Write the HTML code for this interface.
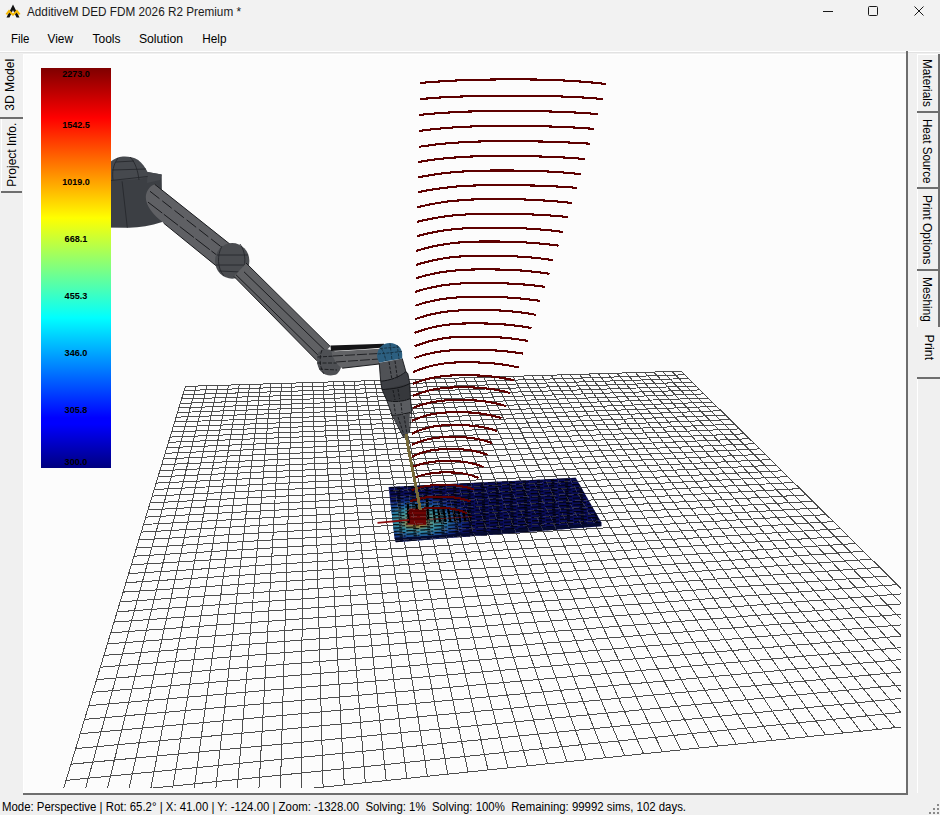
<!DOCTYPE html>
<html><head><meta charset="utf-8"><title>AdditiveM DED FDM 2026 R2 Premium</title>
<style>
html,body{margin:0;padding:0;width:940px;height:815px;overflow:hidden;background:#f0f0f0;}
svg{position:absolute;left:0;top:0;display:block}
text{font-family:"Liberation Sans",sans-serif;}
</style></head><body>
<svg width="940" height="815" viewBox="0 0 940 815">
<defs>
<clipPath id="vp"><rect x="24" y="55" width="877" height="733"/></clipPath>
<linearGradient id="jet" x1="0" y1="1" x2="0" y2="0">
<stop offset="0" stop-color="#00007f"/>
<stop offset="0.11" stop-color="#0000ff"/>
<stop offset="0.125" stop-color="#0000ff"/>
<stop offset="0.375" stop-color="#00ffff"/>
<stop offset="0.625" stop-color="#ffff00"/>
<stop offset="0.875" stop-color="#ff0000"/>
<stop offset="1" stop-color="#7f0000"/>
</linearGradient>
</defs>
<rect x="0" y="0" width="940" height="815" fill="#f0f0f0"/>
<!-- title bar -->
<rect x="0" y="0" width="940" height="27" fill="#f2f2f2"/>
<rect x="0" y="27" width="940" height="24" fill="#f2f2f2"/>
<rect x="0" y="51" width="940" height="1" fill="#ffffff"/>
<rect x="0" y="52" width="940" height="1" fill="#e2e2e2"/>

<g>
<path d="M13 4.5 L19.5 17.5 L16.5 17.5 L13 10 L9.5 17.5 L6.5 17.5 Z" fill="#111"/>
<path d="M5.5 14 L9 9.5 L13 13.5 L17 9.5 L20.5 14 L18.5 15 L17 12.5 L13 16 L9 12.5 L7.5 15 Z" fill="#f5b800"/>
</g>
<text x="27" y="15.6" font-size="12.2" fill="#1a1a1a" textLength="214" lengthAdjust="spacingAndGlyphs">AdditiveM DED FDM 2026 R2 Premium *</text>
<rect x="823" y="11" width="10" height="1" fill="#1a1a1a"/>
<rect x="868.5" y="6.5" width="9" height="9" rx="1" fill="none" stroke="#1a1a1a" stroke-width="1"/>
<path d="M914.5 6.5 L923.5 15.5 M923.5 6.5 L914.5 15.5" stroke="#1a1a1a" stroke-width="1"/>
<text x="11" y="42.7" font-size="12" fill="#000" textLength="18.5" lengthAdjust="spacingAndGlyphs">File</text>
<text x="47.5" y="42.7" font-size="12" fill="#000" textLength="25.5" lengthAdjust="spacingAndGlyphs">View</text>
<text x="92.5" y="42.7" font-size="12" fill="#000" textLength="28" lengthAdjust="spacingAndGlyphs">Tools</text>
<text x="138.9" y="42.7" font-size="12" fill="#000" textLength="44.2" lengthAdjust="spacingAndGlyphs">Solution</text>
<text x="202.3" y="42.7" font-size="12" fill="#000" textLength="24.2" lengthAdjust="spacingAndGlyphs">Help</text>
<rect x="23" y="54" width="885" height="741" fill="#fcfcfc"/>
<rect x="23" y="54" width="883" height="1" fill="#ffffff"/>
<rect x="23" y="54" width="1" height="739" fill="#ffffff"/>
<rect x="906" y="51" width="2" height="744" fill="#6e6e6e"/>
<rect x="23" y="793" width="885" height="2" fill="#6e6e6e"/>

<g clip-path="url(#vp)">
<path d="M185.4 386.4L55.6 814.9M196.2 386.1L78.9 812.5M207.0 385.7L102.0 810.1M217.8 385.4L124.9 807.7M228.5 385.1L147.6 805.3M239.2 384.7L170.2 803.0M249.8 384.4L192.5 800.7M260.4 384.1L214.7 798.4M270.9 383.8L236.7 796.1M281.5 383.4L258.6 793.8M291.9 383.1L280.3 791.6M302.4 382.8L301.8 789.3M312.8 382.5L323.1 787.1M323.1 382.2L344.3 784.9M333.5 381.8L365.3 782.7M343.7 381.5L386.2 780.6M354.0 381.2L406.9 778.4M364.2 380.9L427.4 776.3M374.4 380.6L447.8 774.1M384.5 380.3L468.1 772.0M394.6 380.0L488.1 770.0M404.6 379.7L508.1 767.9M414.7 379.4L527.9 765.8M424.6 379.0L547.5 763.8M434.6 378.7L567.0 761.8M444.5 378.4L586.4 759.7M454.4 378.1L605.6 757.7M464.2 377.8L624.7 755.8M474.0 377.5L643.6 753.8M483.8 377.2L662.4 751.8M493.5 376.9L681.1 749.9M503.2 376.6L699.6 748.0M512.9 376.3L718.0 746.1M522.5 376.0L736.3 744.2M532.1 375.7L754.4 742.3M541.7 375.5L772.4 740.4M551.2 375.2L790.3 738.6M560.7 374.9L808.1 736.7M570.1 374.6L825.7 734.9M579.5 374.3L843.2 733.1M588.9 374.0L860.6 731.2M598.3 373.7L877.9 729.5M607.6 373.4L895.0 727.7M616.9 373.1L912.1 725.9M626.1 372.9L929.0 724.1M635.4 372.6L945.8 722.4M644.6 372.3L962.5 720.7M653.7 372.0L979.0 718.9M662.8 371.7L995.5 717.2M671.9 371.5L1011.9 715.5M681.0 371.2L1028.1 713.8M185.4 386.4L681.0 371.2M184.1 390.5L684.7 374.8M182.8 394.7L688.4 378.5M181.5 399.0L692.2 382.2M180.2 403.4L696.1 386.0M178.8 407.9L700.0 389.9M177.5 412.5L704.0 393.9M176.0 417.2L708.2 398.0M174.6 422.0L712.4 402.1M173.1 426.9L716.6 406.4M171.6 431.9L721.0 410.7M170.0 437.1L725.5 415.1M168.4 442.3L730.1 419.6M166.8 447.7L734.7 424.2M165.1 453.3L739.5 428.9M163.4 458.9L744.4 433.8M161.6 464.7L749.4 438.7M159.8 470.7L754.5 443.7M158.0 476.8L759.7 448.9M156.1 483.1L765.1 454.2M154.1 489.5L770.5 459.6M152.1 496.1L776.1 465.1M150.1 502.9L781.9 470.8M148.0 509.9L787.7 476.6M145.8 517.1L793.8 482.5M143.6 524.5L799.9 488.6M141.3 532.1L806.3 494.9M138.9 539.9L812.8 501.3M136.4 547.9L819.4 507.9M133.9 556.2L826.3 514.6M131.4 564.8L833.3 521.6M128.7 573.6L840.5 528.7M125.9 582.7L848.0 536.0M123.1 592.1L855.6 543.5M120.2 601.8L863.4 551.3M117.1 611.8L871.5 559.2M114.0 622.1L879.8 567.4M110.8 632.8L888.4 575.9M107.4 643.9L897.2 584.6M103.9 655.4L906.2 593.5M100.3 667.2L915.6 602.8M96.6 679.6L925.3 612.3M92.7 692.3L935.2 622.1M88.7 705.6L945.5 632.3M84.5 719.4L956.1 642.8M80.2 733.7L967.1 653.6M75.7 748.6L978.5 664.9M71.0 764.2L990.2 676.5M66.1 780.4L1002.4 688.5M61.0 797.3L1015.0 700.9M55.6 814.9L1028.1 713.8" stroke="#4d4d4d" stroke-width="1" fill="none" shape-rendering="crispEdges"/>
</g>
<defs>
<radialGradient id="heat" cx="0.5" cy="0.5" r="0.5">
<stop offset="0" stop-color="#a08838"/>
<stop offset="0.2" stop-color="#5a9a88"/>
<stop offset="0.45" stop-color="#2e88a8"/>
<stop offset="0.72" stop-color="#1a48a0" stop-opacity="0.7"/>
<stop offset="1" stop-color="#0b1068" stop-opacity="0"/>
</radialGradient>
<radialGradient id="hot" cx="0.5" cy="0.5" r="0.5">
<stop offset="0" stop-color="#c87818"/>
<stop offset="0.6" stop-color="#a07028" stop-opacity="0.6"/>
<stop offset="1" stop-color="#a07028" stop-opacity="0"/>
</radialGradient>
<pattern id="mesh" width="14" height="3.4" patternUnits="userSpaceOnUse" patternTransform="rotate(-3)">
<rect x="0" y="0" width="10" height="1.3" fill="#000"/>
<rect x="7" y="1.7" width="6" height="1.1" fill="#000"/>
</pattern>
<clipPath id="platec"><polygon points="388.6,487.1 575.7,477.8 601.4,522.6 601.4,526.3 395.9,542.2 394.7,538.5"/></clipPath>
</defs>
<g clip-path="url(#vp)">
<polygon points="388.6,487.1 575.7,477.8 601.4,522.6 601.4,526.3 395.9,542.2 394.7,538.5" fill="#0a0d5c"/>
<g clip-path="url(#platec)">
<ellipse cx="418" cy="520" rx="58" ry="27" fill="url(#heat)"/>
<ellipse cx="416" cy="524" rx="16" ry="6" fill="url(#hot)"/>
<rect x="0" y="470" width="620" height="80" fill="url(#mesh)" opacity="0.9"/>
<rect x="407.6" y="508.5" width="18.6" height="16.3" fill="#6e0505"/>
<path d="M409 511h18M410 515h17M409 519h18" stroke="#3a0000" stroke-width="1"/>
<path d="M407.8 502.5l0.8 20.5M427 499.5l1 19.5M416 504l1 6M433 506l2 16M438 507l2 15M443 507l2.5 15M448 508l2.5 14M453 508l2.5 14M458 509l2.5 13M463 510l2.5 12M468 511l2 10" stroke="#000" stroke-width="2.2"/>
<path d="M428 519.5 L472 516.5" stroke="#901010" stroke-width="1" opacity="0.6"/>
<path d="M394.7 540 L601.4 524.2" stroke="#050a30" stroke-width="3"/>

<path d="M185.4 386.4L55.6 814.9M196.2 386.1L78.9 812.5M207.0 385.7L102.0 810.1M217.8 385.4L124.9 807.7M228.5 385.1L147.6 805.3M239.2 384.7L170.2 803.0M249.8 384.4L192.5 800.7M260.4 384.1L214.7 798.4M270.9 383.8L236.7 796.1M281.5 383.4L258.6 793.8M291.9 383.1L280.3 791.6M302.4 382.8L301.8 789.3M312.8 382.5L323.1 787.1M323.1 382.2L344.3 784.9M333.5 381.8L365.3 782.7M343.7 381.5L386.2 780.6M354.0 381.2L406.9 778.4M364.2 380.9L427.4 776.3M374.4 380.6L447.8 774.1M384.5 380.3L468.1 772.0M394.6 380.0L488.1 770.0M404.6 379.7L508.1 767.9M414.7 379.4L527.9 765.8M424.6 379.0L547.5 763.8M434.6 378.7L567.0 761.8M444.5 378.4L586.4 759.7M454.4 378.1L605.6 757.7M464.2 377.8L624.7 755.8M474.0 377.5L643.6 753.8M483.8 377.2L662.4 751.8M493.5 376.9L681.1 749.9M503.2 376.6L699.6 748.0M512.9 376.3L718.0 746.1M522.5 376.0L736.3 744.2M532.1 375.7L754.4 742.3M541.7 375.5L772.4 740.4M551.2 375.2L790.3 738.6M560.7 374.9L808.1 736.7M570.1 374.6L825.7 734.9M579.5 374.3L843.2 733.1M588.9 374.0L860.6 731.2M598.3 373.7L877.9 729.5M607.6 373.4L895.0 727.7M616.9 373.1L912.1 725.9M626.1 372.9L929.0 724.1M635.4 372.6L945.8 722.4M644.6 372.3L962.5 720.7M653.7 372.0L979.0 718.9M662.8 371.7L995.5 717.2M671.9 371.5L1011.9 715.5M681.0 371.2L1028.1 713.8M185.4 386.4L681.0 371.2M184.1 390.5L684.7 374.8M182.8 394.7L688.4 378.5M181.5 399.0L692.2 382.2M180.2 403.4L696.1 386.0M178.8 407.9L700.0 389.9M177.5 412.5L704.0 393.9M176.0 417.2L708.2 398.0M174.6 422.0L712.4 402.1M173.1 426.9L716.6 406.4M171.6 431.9L721.0 410.7M170.0 437.1L725.5 415.1M168.4 442.3L730.1 419.6M166.8 447.7L734.7 424.2M165.1 453.3L739.5 428.9M163.4 458.9L744.4 433.8M161.6 464.7L749.4 438.7M159.8 470.7L754.5 443.7M158.0 476.8L759.7 448.9M156.1 483.1L765.1 454.2M154.1 489.5L770.5 459.6M152.1 496.1L776.1 465.1M150.1 502.9L781.9 470.8M148.0 509.9L787.7 476.6M145.8 517.1L793.8 482.5M143.6 524.5L799.9 488.6M141.3 532.1L806.3 494.9M138.9 539.9L812.8 501.3M136.4 547.9L819.4 507.9M133.9 556.2L826.3 514.6M131.4 564.8L833.3 521.6M128.7 573.6L840.5 528.7M125.9 582.7L848.0 536.0M123.1 592.1L855.6 543.5M120.2 601.8L863.4 551.3M117.1 611.8L871.5 559.2M114.0 622.1L879.8 567.4M110.8 632.8L888.4 575.9M107.4 643.9L897.2 584.6M103.9 655.4L906.2 593.5M100.3 667.2L915.6 602.8M96.6 679.6L925.3 612.3M92.7 692.3L935.2 622.1M88.7 705.6L945.5 632.3M84.5 719.4L956.1 642.8M80.2 733.7L967.1 653.6M75.7 748.6L978.5 664.9M71.0 764.2L990.2 676.5M66.1 780.4L1002.4 688.5M61.0 797.3L1015.0 700.9M55.6 814.9L1028.1 713.8" stroke="#808080" stroke-width="1" fill="none" opacity="0.32" stroke-dasharray="6 3" shape-rendering="crispEdges"/>
</g>
</g>
<path d="M420.4 83.0L427.0 82.4L433.7 81.9L440.3 81.4L447.0 81.0L453.6 80.6L460.2 80.3L466.9 80.1L473.5 79.9L480.2 79.7L486.8 79.6L493.4 79.5L500.1 79.4L506.7 79.4L513.3 79.4L520.0 79.4L526.6 79.4L533.3 79.5L539.9 79.6L546.5 79.8L553.2 80.0L559.8 80.3L566.5 80.6L573.1 81.0L579.7 81.5L586.4 82.0L593.0 82.6L599.7 83.3L606.3 84.0M420.4 99.0L426.9 98.5L433.4 98.0L440.0 97.5L446.5 97.2L453.0 96.8L459.5 96.6L466.1 96.3L472.6 96.1L479.1 96.0L485.6 95.9L492.1 95.8L498.7 95.7L505.2 95.7L511.7 95.7L518.2 95.7L524.7 95.7L531.3 95.8L537.8 95.9L544.3 96.0L550.8 96.1L557.4 96.3L563.9 96.6L570.4 96.8L576.9 97.2L583.4 97.5L590.0 98.0L596.5 98.5L603.0 99.0M419.1 114.9L425.5 114.3L431.9 113.7L438.3 113.2L444.6 112.7L451.0 112.4L457.4 112.0L463.8 111.7L470.2 111.5L476.6 111.3L483.0 111.2L489.3 111.1L495.7 111.0L502.1 111.0L508.5 111.0L514.9 111.0L521.3 111.0L527.7 111.1L534.0 111.2L540.4 111.3L546.8 111.4L553.2 111.6L559.6 111.8L566.0 112.1L572.4 112.4L578.7 112.7L585.1 113.1L591.5 113.6L597.9 114.1M419.1 131.0L425.3 130.2L431.6 129.4L437.8 128.8L444.1 128.2L450.3 127.7L456.6 127.2L462.8 126.9L469.1 126.6L475.3 126.3L481.6 126.2L487.8 126.0L494.1 125.9L500.3 125.9L506.6 125.9L512.8 125.9L519.0 125.9L525.3 126.0L531.5 126.0L537.8 126.2L544.0 126.3L550.3 126.5L556.5 126.7L562.8 126.9L569.0 127.2L575.3 127.6L581.5 128.0L587.8 128.4L594.0 128.9M419.1 146.8L425.2 145.9L431.3 145.1L437.4 144.3L443.5 143.7L449.6 143.1L455.7 142.7L461.8 142.3L467.8 141.9L473.9 141.7L480.0 141.5L486.1 141.3L492.2 141.3L498.3 141.2L504.4 141.2L510.5 141.2L516.6 141.2L522.7 141.3L528.8 141.3L534.9 141.4L541.0 141.5L547.1 141.7L553.1 141.9L559.2 142.1L565.3 142.3L571.4 142.6L577.5 142.9L583.6 143.3L589.7 143.7M417.9 162.1L423.9 161.1L429.8 160.2L435.8 159.4L441.7 158.7L447.7 158.1L453.6 157.6L459.6 157.2L465.5 156.8L471.5 156.5L477.4 156.3L483.4 156.2L489.3 156.1L495.3 156.0L501.2 156.0L507.2 156.0L513.2 156.0L519.1 156.1L525.1 156.1L531.0 156.3L537.0 156.4L542.9 156.6L548.9 156.8L554.8 157.0L560.8 157.3L566.7 157.7L572.7 158.1L578.6 158.5L584.6 159.0M417.9 177.4L423.7 176.3L429.5 175.3L435.3 174.4L441.2 173.6L447.0 172.9L452.8 172.3L458.6 171.8L464.4 171.4L470.2 171.1L476.0 170.8L481.9 170.7L487.7 170.6L493.5 170.5L499.3 170.5L505.1 170.5L510.9 170.5L516.7 170.6L522.6 170.7L528.4 170.8L534.2 171.0L540.0 171.2L545.8 171.4L551.6 171.7L557.4 172.1L563.3 172.5L569.1 173.0L574.9 173.5L580.7 174.1M417.9 192.2L423.6 191.0L429.2 190.0L434.9 189.1L440.6 188.3L446.3 187.6L451.9 187.0L457.6 186.4L463.3 186.0L468.9 185.7L474.6 185.5L480.3 185.3L486.0 185.2L491.6 185.1L497.3 185.1L503.0 185.1L508.6 185.1L514.3 185.2L520.0 185.2L525.7 185.3L531.3 185.5L537.0 185.6L542.7 185.8L548.3 186.1L554.0 186.3L559.7 186.7L565.4 187.0L571.0 187.4L576.7 187.9M417.2 207.3L422.7 206.0L428.2 204.8L433.8 203.7L439.3 202.8L444.8 201.9L450.3 201.2L455.8 200.7L461.4 200.2L466.9 199.8L472.4 199.5L477.9 199.3L483.5 199.2L489.0 199.1L494.5 199.1L500.0 199.1L505.5 199.1L511.1 199.2L516.6 199.3L522.1 199.4L527.6 199.6L533.1 199.8L538.7 200.1L544.2 200.5L549.7 200.8L555.2 201.3L560.8 201.8L566.3 202.4L571.8 203.0M417.0 221.9L422.4 220.6L427.8 219.4L433.2 218.3L438.6 217.4L444.0 216.6L449.4 215.9L454.8 215.3L460.1 214.9L465.5 214.5L470.9 214.2L476.3 214.0L481.7 213.9L487.1 213.8L492.5 213.8L497.9 213.8L503.3 213.8L508.7 213.9L514.1 214.0L519.5 214.1L524.9 214.2L530.2 214.4L535.6 214.6L541.0 214.9L546.4 215.2L551.8 215.6L557.2 216.0L562.6 216.5L568.0 217.0M417.0 236.2L422.2 234.8L427.4 233.6L432.6 232.5L437.8 231.5L443.0 230.6L448.2 229.9L453.4 229.3L458.7 228.8L463.9 228.4L469.1 228.1L474.3 227.9L479.5 227.8L484.7 227.7L489.9 227.7L495.1 227.7L500.3 227.7L505.5 227.8L510.7 227.9L515.9 228.1L521.1 228.2L526.4 228.5L531.6 228.8L536.8 229.2L542.0 229.6L547.2 230.1L552.4 230.6L557.6 231.2L562.8 231.9M416.0 251.0L421.1 249.5L426.2 248.1L431.3 246.8L436.4 245.7L441.4 244.8L446.5 244.0L451.6 243.3L456.7 242.7L461.8 242.3L466.9 242.0L472.0 241.7L477.1 241.6L482.2 241.5L487.2 241.5L492.3 241.5L497.4 241.5L502.5 241.6L507.6 241.7L512.7 241.9L517.8 242.0L522.9 242.3L528.0 242.6L533.1 243.0L538.1 243.4L543.2 243.9L548.3 244.4L553.4 245.0L558.5 245.7M416.0 264.9L420.9 263.4L425.8 262.1L430.7 260.9L435.6 259.8L440.5 258.9L445.4 258.1L450.3 257.4L455.2 256.9L460.1 256.5L465.0 256.2L469.9 255.9L474.8 255.8L479.7 255.7L484.6 255.7L489.5 255.7L494.4 255.7L499.3 255.8L504.2 255.9L509.1 256.1L514.0 256.3L518.9 256.6L523.8 256.9L528.7 257.3L533.6 257.7L538.5 258.2L543.4 258.8L548.3 259.5L553.2 260.2M416.0 278.3L420.8 276.8L425.5 275.5L430.3 274.4L435.1 273.4L439.9 272.5L444.6 271.7L449.4 271.1L454.2 270.6L458.9 270.2L463.7 269.8L468.5 269.6L473.3 269.5L478.0 269.4L482.8 269.4L487.6 269.4L492.3 269.4L497.1 269.5L501.9 269.6L506.7 269.8L511.4 270.0L516.2 270.2L521.0 270.5L525.7 270.9L530.5 271.4L535.3 271.9L540.1 272.4L544.8 273.1L549.6 273.8M415.3 291.9L419.9 290.4L424.5 289.1L429.2 288.0L433.8 287.0L438.4 286.1L443.0 285.3L447.7 284.7L452.3 284.2L456.9 283.8L461.5 283.4L466.1 283.2L470.8 283.1L475.4 283.0L480.0 283.0L484.6 283.0L489.2 283.0L493.9 283.1L498.5 283.2L503.1 283.3L507.7 283.5L512.4 283.7L517.0 284.0L521.6 284.3L526.2 284.7L530.8 285.1L535.5 285.6L540.1 286.2L544.7 286.8M415.3 305.7L419.8 304.2L424.2 302.9L428.7 301.8L433.2 300.8L437.6 299.9L442.1 299.1L446.6 298.5L451.0 298.0L455.5 297.6L460.0 297.2L464.4 297.0L468.9 296.9L473.4 296.8L477.9 296.8L482.3 296.8L486.8 296.8L491.3 296.9L495.7 297.0L500.2 297.2L504.7 297.3L509.1 297.6L513.6 297.9L518.1 298.3L522.5 298.7L527.0 299.2L531.5 299.7L535.9 300.3L540.4 301.0M415.3 319.1L419.6 317.6L423.9 316.3L428.3 315.1L432.6 314.1L436.9 313.2L441.2 312.4L445.5 311.7L449.8 311.2L454.2 310.8L458.5 310.5L462.8 310.2L467.1 310.1L471.4 310.0L475.8 310.0L480.1 310.0L484.4 310.0L488.7 310.1L493.0 310.2L497.3 310.4L501.7 310.6L506.0 310.9L510.3 311.3L514.6 311.7L518.9 312.2L523.2 312.7L527.6 313.4L531.9 314.1L536.2 314.9M414.5 333.0L418.7 331.4L422.9 330.0L427.0 328.8L431.2 327.7L435.4 326.7L439.6 325.9L443.8 325.2L447.9 324.7L452.1 324.2L456.3 323.9L460.5 323.6L464.6 323.5L468.8 323.4L473.0 323.4L477.2 323.4L481.4 323.4L485.5 323.5L489.7 323.6L493.9 323.8L498.1 324.0L502.2 324.3L506.4 324.6L510.6 325.0L514.8 325.5L519.0 326.0L523.1 326.6L527.3 327.3L531.5 328.0M414.5 346.4L418.5 344.8L422.6 343.4L426.6 342.1L430.7 341.0L434.7 340.0L438.8 339.2L442.8 338.5L446.8 337.9L450.9 337.4L454.9 337.1L459.0 336.8L463.0 336.7L467.1 336.6L471.1 336.6L475.1 336.6L479.2 336.6L483.2 336.7L487.3 336.8L491.3 337.0L495.4 337.2L499.4 337.4L503.4 337.7L507.5 338.1L511.5 338.5L515.6 339.0L519.6 339.6L523.7 340.2L527.7 340.9M414.4 358.0L418.3 356.7L422.2 355.5L426.0 354.4L429.9 353.5L433.8 352.6L437.7 351.9L441.5 351.4L445.4 350.9L449.3 350.5L453.2 350.2L457.1 350.0L460.9 349.9L464.8 349.8L468.7 349.8L472.6 349.8L476.5 349.8L480.3 349.9L484.2 350.0L488.1 350.1L492.0 350.3L495.9 350.5L499.7 350.8L503.6 351.1L507.5 351.5L511.4 351.9L515.2 352.4L519.1 353.0L523.0 353.6M413.3 372.1L417.1 370.5L420.8 369.1L424.6 367.8L428.3 366.7L432.1 365.7L435.9 364.9L439.6 364.2L443.4 363.6L447.1 363.1L450.9 362.8L454.7 362.5L458.4 362.4L462.2 362.3L466.0 362.3L469.7 362.3L473.5 362.3L477.2 362.4L481.0 362.6L484.8 362.7L488.5 363.0L492.3 363.3L496.0 363.7L499.8 364.1L503.6 364.6L507.3 365.2L511.1 365.9L514.8 366.7L518.6 367.5M413.0 383.8L416.6 382.4L420.2 381.1L423.9 380.0L427.5 379.0L431.1 378.2L434.7 377.4L438.3 376.8L441.9 376.3L445.6 375.9L449.2 375.6L452.8 375.4L456.4 375.3L460.0 375.2L463.6 375.2L467.3 375.2L470.9 375.2L474.5 375.3L478.1 375.5L481.7 375.6L485.4 375.9L489.0 376.2L492.6 376.6L496.2 377.0L499.8 377.5L503.4 378.1L507.1 378.8L510.7 379.6L514.3 380.4M413.0 395.8L416.5 394.4L419.9 393.2L423.4 392.1L426.9 391.1L430.3 390.2L433.8 389.5L437.2 388.9L440.7 388.4L444.2 388.0L447.6 387.7L451.1 387.5L454.6 387.4L458.0 387.3L461.5 387.3L465.0 387.3L468.4 387.4L471.9 387.4L475.4 387.6L478.8 387.8L482.3 388.0L485.8 388.4L489.2 388.8L492.7 389.3L496.1 389.8L499.6 390.5L503.1 391.2L506.5 392.1L510.0 393.0M413.0 407.9L416.3 406.6L419.6 405.5L422.9 404.4L426.2 403.5L429.6 402.7L432.9 402.1L436.2 401.5L439.5 401.0L442.8 400.7L446.1 400.4L449.4 400.2L452.7 400.1L456.0 400.0L459.3 400.0L462.7 400.0L466.0 400.1L469.3 400.1L472.6 400.3L475.9 400.5L479.2 400.8L482.5 401.1L485.8 401.6L489.1 402.1L492.5 402.7L495.8 403.4L499.1 404.1L502.4 405.0L505.7 406.0M412.0 420.8L415.2 419.4L418.4 418.1L421.6 417.0L424.8 416.0L428.0 415.2L431.2 414.4L434.4 413.8L437.5 413.3L440.7 412.9L443.9 412.6L447.1 412.4L450.3 412.3L453.5 412.2L456.7 412.2L459.9 412.2L463.1 412.3L466.3 412.3L469.5 412.5L472.7 412.7L475.9 413.0L479.0 413.3L482.2 413.8L485.4 414.3L488.6 414.9L491.8 415.6L495.0 416.3L498.2 417.2L501.4 418.2M412.0 433.6L415.0 432.2L418.1 430.9L421.1 429.8L424.1 428.8L427.2 428.0L430.2 427.2L433.2 426.6L436.3 426.1L439.3 425.7L442.4 425.4L445.4 425.2L448.4 425.1L451.5 425.0L454.5 425.0L457.5 425.0L460.6 425.1L463.6 425.1L466.6 425.3L469.7 425.5L472.7 425.8L475.8 426.1L478.8 426.6L481.8 427.1L484.9 427.7L487.9 428.4L490.9 429.1L494.0 430.0L497.0 431.0M412.0 444.8L414.9 443.5L417.7 442.4L420.6 441.4L423.4 440.5L426.3 439.7L429.1 439.0L432.0 438.5L434.9 438.0L437.7 437.7L440.6 437.4L443.4 437.2L446.3 437.1L449.1 437.0L452.0 437.0L454.9 437.0L457.7 437.1L460.6 437.1L463.4 437.3L466.3 437.5L469.1 437.8L472.0 438.1L474.9 438.6L477.7 439.1L480.6 439.7L483.4 440.4L486.3 441.1L489.1 442.0L492.0 443.0M412.0 456.8L414.7 455.5L417.4 454.4L420.1 453.4L422.8 452.5L425.5 451.7L428.2 451.0L430.9 450.5L433.6 450.0L436.3 449.7L439.0 449.4L441.7 449.2L444.4 449.1L447.1 449.0L449.8 449.0L452.6 449.0L455.3 449.1L458.0 449.1L460.7 449.3L463.4 449.5L466.1 449.8L468.8 450.1L471.5 450.5L474.2 451.0L476.9 451.6L479.6 452.3L482.3 453.0L485.0 453.9L487.7 454.8M413.5 466.6L416.0 465.7L418.5 464.9L421.0 464.1L423.5 463.5L426.0 462.9L428.5 462.5L431.0 462.1L433.5 461.7L436.0 461.5L438.5 461.3L441.0 461.1L443.5 461.1L446.0 461.0L448.4 461.0L450.9 461.0L453.4 461.1L455.9 461.1L458.4 461.3L460.9 461.5L463.4 461.8L465.9 462.1L468.4 462.6L470.9 463.1L473.4 463.7L475.9 464.4L478.4 465.1L480.9 466.0L483.4 467.0M415.6 477.3L417.9 476.5L420.1 475.8L422.4 475.1L424.6 474.6L426.9 474.1L429.1 473.7L431.4 473.3L433.6 473.0L435.9 472.8L438.1 472.6L440.4 472.5L442.6 472.4L444.9 472.4L447.1 472.4L449.4 472.4L451.6 472.5L453.9 472.5L456.1 472.7L458.4 472.9L460.6 473.1L462.9 473.5L465.1 473.9L467.4 474.3L469.6 474.9L471.9 475.5L474.1 476.3L476.4 477.1L478.6 478.0M411.5 490.4L413.7 489.5L416.0 488.7L418.2 488.0L420.5 487.4L422.7 486.8L425.0 486.3L427.2 485.9L429.5 485.6L431.7 485.4L434.0 485.2L436.2 485.0L438.5 485.0L440.7 484.9L442.9 484.9L445.2 484.9L447.4 484.9L449.7 485.0L451.9 485.1L454.2 485.3L456.4 485.5L458.7 485.8L460.9 486.2L463.2 486.6L465.4 487.0L467.7 487.6L469.9 488.2L472.2 488.9L474.4 489.7M410.1 501.5L412.2 500.7L414.4 500.0L416.6 499.4L418.7 498.8L420.9 498.4L423.0 498.0L425.2 497.6L427.3 497.3L429.5 497.1L431.6 496.9L433.8 496.8L435.9 496.7L438.1 496.7L440.2 496.7L442.4 496.7L444.5 496.7L446.7 496.8L448.8 496.9L450.9 497.1L453.1 497.3L455.2 497.6L457.4 498.0L459.6 498.4L461.7 498.8L463.9 499.4L466.0 500.0L468.2 500.7L470.3 501.5M408.0 513.0L410.1 512.1L412.2 511.4L414.3 510.7L416.4 510.1L418.5 509.5L420.6 509.1L422.7 508.7L424.8 508.4L426.9 508.1L429.0 508.0L431.1 507.8L433.2 507.7L435.3 507.7L437.4 507.7L439.5 507.7L441.6 507.8L443.7 507.8L445.8 508.0L447.9 508.2L450.0 508.4L452.1 508.8L454.2 509.2L456.3 509.6L458.4 510.2L460.5 510.8L462.6 511.6L464.7 512.4L466.8 513.3" stroke="#5e0000" stroke-width="2.1" stroke-linejoin="round" fill="none" shape-rendering="crispEdges"/>
<path d="M377.5 522.8 L409 519.8" stroke="#8a0c0c" stroke-width="1.8"/>
<text x="0" y="0"></text>
<g id="robot" stroke-linejoin="round">
<!-- shoulder base -->
<path d="M100 180 L147.6 172 L161.7 174.5 L162.2 222 C150 226 138 228 126.8 227.7 L100 227.5 Z" fill="#3c3f44"/>
<path d="M147.6 172 L161.7 174.5 L160 180 L147 183 Z" fill="#45484d"/>
<path d="M100 180.2 C100 168 111 160 118 157.5 C123 156 131 156 138.2 159.9 C142 163 145 167 147.6 172 L147.6 177 C140 179.5 125 180.5 100 180.2 Z" fill="#46494e"/>
<path d="M111 180.5 L147.6 176.5 M122.1 181.3 L127.3 227.7 M118 158 C113 165 112 172 113 180 M130 157 C136 163 138 172 139 180 M112 170 L146 169 M116 162 L134 161" stroke="#26282c" stroke-width="0.9" fill="none"/>
<!-- upper arm -->
<path d="M154.7 184.3 L233 246.6 L226 274 L163.6 223.1 C152 214 144.5 204 146 195 C147.5 189 150.5 186 154.7 184.3 Z" fill="#5f6064"/>
<path d="M154.7 184.3 L232 245.8 M163.6 223.1 L226 273.8" stroke="#1a1b1e" stroke-width="1" fill="none"/>
<path d="M150 191.3 L225 249.8" stroke="#1a1b1e" stroke-width="1" stroke-dasharray="12 3.5" fill="none"/>
<path d="M148 202.1 L219 256.8" stroke="#1a1b1e" stroke-width="1" stroke-dasharray="18 2" fill="none"/>
<!-- elbow -->
<ellipse cx="232.2" cy="260.9" rx="17.2" ry="17.8" fill="#4a4c50"/>
<path d="M222 246 C217 255 217 268 224 276 M240 244 C246 252 247 266 240 276 M217 255 L248 255 M216 265 L247 265 M219 271 L242 272" stroke="#26282c" stroke-width="0.9" fill="none"/>
<!-- forearm -->
<path d="M246 263 L330.2 346.4 L317 360.8 L234 276.5 C238 272 243 267 246 263 Z" fill="#606164"/>
<path d="M246 263 L330.2 346.4 M234 276.5 L317 360.8" stroke="#1a1b1e" stroke-width="1" fill="none"/>
<path d="M244 271.8 L326 351.3 M236 274.8 L320 357.1" stroke="#1a1b1e" stroke-width="1" fill="none"/>
<!-- wrist -->
<path d="M322 349.5 C330 348.5 337 351 340.5 357 C342.5 363 341.5 370 337 374 C332 376.5 325 376 320.5 371 C316.5 366 316 357 318.5 352.5 Z" fill="#4e5054"/>
<path d="M322 350 C319 357 319.5 367 324 374 M317.5 357 L336 356 M317 363 L338 363 M319 369 L337 370" stroke="#1a1b1e" stroke-width="0.9" fill="none" stroke-dasharray="4 1.5"/>
<!-- link -->
<path d="M330.4 345.6 L384 343.8 L384 347.6 L362 349.2 L331 351 Z" fill="#141416"/>
<path d="M331.5 351.5 L379 348.8 L379 364 L342.3 368.2 C337 365.5 333 359 331.5 351.5 Z" fill="#626366"/>
<path d="M333 356 L379 353.5 M336 362 L379 359" stroke="#1a1b1e" stroke-width="0.9" stroke-dasharray="10 2" fill="none"/>
<path d="M342.3 368.2 L379 364" stroke="#1a1b1e" stroke-width="1" fill="none"/>
<!-- tool -->
<path d="M379.2 362.7 L402.2 358.4 L406 372 C400 377 390 381 380.7 381.5 Z" fill="#505256"/>
<path d="M380.7 381.2 C390 380.5 400 377 406 371.5 L407.8 373.5 L409.8 383.5 C402 388 392 389.5 382 390 Z" fill="#3e4045"/>
<path d="M382 389.5 L409.8 383.5 L410.8 398.5 Q398 403.5 386.8 400.5 Z" fill="#36383c"/>
<path d="M386.8 400.5 Q398 403.5 410.8 398.5 L411.7 412 C404 414 398 415.5 392.2 415.4 Z" fill="#5a5c60"/>
<path d="M392.8 415.8 L409.9 413.6 L409.4 432.2 L403.8 437.8 Z" fill="#4a4c50"/>
<g fill="none" stroke="#141518" stroke-width="1">
<path d="M380.7 381.2 C390 380.5 400 377 406 371.5 M382 389.5 C392 389 402 388 409.8 383.5 M386.8 400.5 Q398 403.5 410.8 398.5 M392.2 415.4 C398 415.5 404 414 411.7 412"/>
<path d="M379.2 362.7 L380.7 381.5 L382 389.5 L386.8 400.5 L392.2 415.4 L403.8 437.8 M402.2 358.4 L406 372 L407.8 373.5 L409.8 383.5 L410.4 397.8 L411.7 412 L409.4 432.2" stroke-width="0.9"/>
<path d="M389 362 L392 380 M395 361 L397.5 379 M393 390 L395 400 M398 389 L399.5 399 M394 404 L395.5 414 M401 403 L402 413 M398 417 L404 435 M404 416 L407 434" stroke-dasharray="3 1.5" stroke-width="0.9"/>
</g>
<!-- blue joint -->
<path d="M377.1 356.6 C377 349 382 343.2 390 343.1 C397 343.2 402.2 348 402.2 354.1 L402.2 358.4 C395 359.5 386 361 379.5 362.7 C378 360.5 377.3 358.5 377.1 356.6 Z" fill="#2c5f80"/>
<path d="M381 348 C384 352 385 357 386 361 M390 343.5 L392 360 M397 345 C398 350 398.5 355 399 359 M378 354 L402 351.5 M380 348.5 L399 347" stroke="#16303f" stroke-width="0.9" fill="none" stroke-dasharray="3 1.2"/>
<!-- wire -->
<path d="M406 434 C410 460 416 485 420.3 510" stroke="#776a38" stroke-width="3" shape-rendering="crispEdges" fill="none"/>
</g>
<rect x="41" y="68" width="70" height="400" fill="url(#jet)"/>
<text x="62.20" y="77.2" font-size="9.4" font-weight="bold" fill="#000" textLength="27.6" lengthAdjust="spacingAndGlyphs">2273.0</text>
<text x="62.20" y="127.6" font-size="9.4" font-weight="bold" fill="#000" textLength="27.6" lengthAdjust="spacingAndGlyphs">1542.5</text>
<text x="62.20" y="184.8" font-size="9.4" font-weight="bold" fill="#000" textLength="27.6" lengthAdjust="spacingAndGlyphs">1019.0</text>
<text x="64.60" y="241.9" font-size="9.4" font-weight="bold" fill="#000" textLength="22.8" lengthAdjust="spacingAndGlyphs">668.1</text>
<text x="64.60" y="299.0" font-size="9.4" font-weight="bold" fill="#000" textLength="22.8" lengthAdjust="spacingAndGlyphs">455.3</text>
<text x="64.60" y="356.2" font-size="9.4" font-weight="bold" fill="#000" textLength="22.8" lengthAdjust="spacingAndGlyphs">346.0</text>
<text x="64.60" y="413.3" font-size="9.4" font-weight="bold" fill="#000" textLength="22.8" lengthAdjust="spacingAndGlyphs">305.8</text>
<text x="64.60" y="465.1" font-size="9.4" font-weight="bold" fill="#000" textLength="22.8" lengthAdjust="spacingAndGlyphs">300.0</text>
<rect x="0" y="117" width="23" height="2" fill="#6e6e6e"/>
<rect x="1" y="119" width="1" height="72" fill="#ffffff"/>
<rect x="1" y="191" width="21" height="2" fill="#6e6e6e"/>

<text transform="translate(13.9,110.8) rotate(-90)" font-size="12" fill="#000" textLength="52" lengthAdjust="spacingAndGlyphs">3D Model</text>
<text transform="translate(16.1,186.7) rotate(-90)" font-size="12" fill="#000" textLength="64" lengthAdjust="spacingAndGlyphs">Project Info.</text>
<rect x="917" y="54" width="1" height="273" fill="#ffffff"/>
<rect x="917" y="54" width="21" height="1" fill="#ffffff"/>
<rect x="938" y="54" width="2" height="273" fill="#6e6e6e"/>
<rect x="917" y="111" width="21" height="2" fill="#6e6e6e"/>
<rect x="917" y="187" width="21" height="2" fill="#6e6e6e"/>
<rect x="917" y="269" width="21" height="2" fill="#6e6e6e"/>
<rect x="917" y="377" width="23" height="2" fill="#6e6e6e"/>
<rect x="917" y="379" width="1" height="414" fill="#ffffff"/>

<text transform="translate(923,59.0) rotate(90)" font-size="12" fill="#000" textLength="47.8" lengthAdjust="spacingAndGlyphs">Materials</text>
<text transform="translate(923,119.0) rotate(90)" font-size="12" fill="#000" textLength="64.4" lengthAdjust="spacingAndGlyphs">Heat Source</text>
<text transform="translate(923,194.9) rotate(90)" font-size="12" fill="#000" textLength="69.6" lengthAdjust="spacingAndGlyphs">Print Options</text>
<text transform="translate(923,277.1) rotate(90)" font-size="12" fill="#000" textLength="44.8" lengthAdjust="spacingAndGlyphs">Meshing</text>
<text transform="translate(925,334.6) rotate(90)" font-size="12" fill="#000" textLength="25.6" lengthAdjust="spacingAndGlyphs">Print</text>
<text x="2" y="810.5" font-size="12" fill="#000" textLength="684" lengthAdjust="spacingAndGlyphs" xml:space="preserve">Mode: Perspective | Rot: 65.2° | X: 41.00 | Y: -124.00 | Zoom: -1328.00  Solving: 1%  Solving: 100%  Remaining: 99992 sims, 102 days.</text>
<g fill="#8a8a8a"><rect x="937" y="804" width="2" height="2"/><rect x="933" y="808" width="2" height="2"/><rect x="937" y="808" width="2" height="2"/><rect x="929" y="812" width="2" height="2"/><rect x="933" y="812" width="2" height="2"/><rect x="937" y="812" width="2" height="2"/></g>
</svg></body></html>
